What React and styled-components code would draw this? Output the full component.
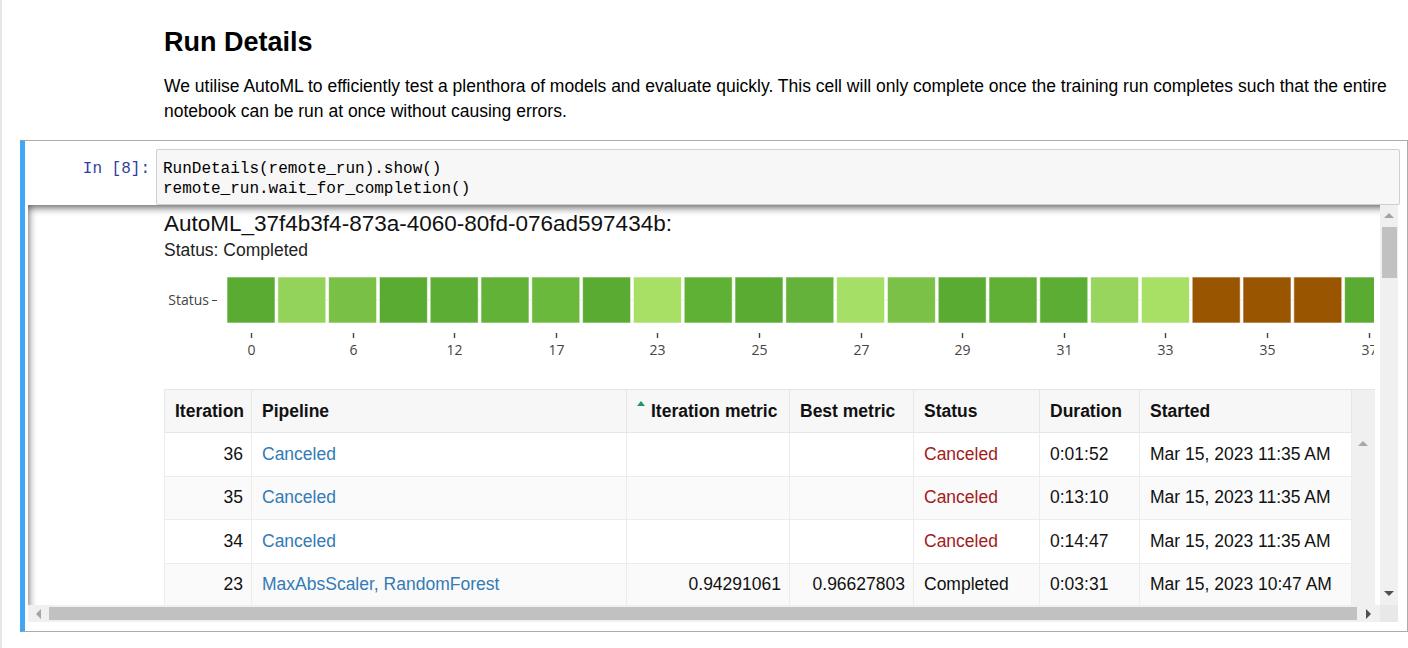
import React from "react";
import styled, { createGlobalStyle } from "styled-components";

const GlobalStyle = createGlobalStyle`
  html, body {
    margin: 0;
    padding: 0;
    background: #fff;
  }
  body {
    font-family: "Liberation Sans", Arial, sans-serif;
    color: #000;
  }
`;

const squares = [
  "#5aab32", "#93d35a", "#79c046", "#5aab32", "#5cad33", "#62b238",
  "#6ab83c", "#5aab32", "#a7e065", "#5fb135", "#5aab32", "#64b23a",
  "#a6df65", "#7bc147", "#5aab32", "#5fb035", "#5cad33", "#98d55c",
  "#a8df65", "#9a5500", "#9a5500", "#9a5500", "#5aab32",
];

const tickLabels = ["0", "6", "12", "17", "23", "25", "27", "29", "31", "33", "35", "37"];

const rows = [
  { it: "36", pipe: "Canceled", metric: "", best: "", status: "Canceled", dur: "0:01:52", started: "Mar 15, 2023 11:35 AM" },
  { it: "35", pipe: "Canceled", metric: "", best: "", status: "Canceled", dur: "0:13:10", started: "Mar 15, 2023 11:35 AM" },
  { it: "34", pipe: "Canceled", metric: "", best: "", status: "Canceled", dur: "0:14:47", started: "Mar 15, 2023 11:35 AM" },
  { it: "23", pipe: "MaxAbsScaler, RandomForest", metric: "0.94291061", best: "0.96627803", status: "Completed", dur: "0:03:31", started: "Mar 15, 2023 10:47 AM" },
];

function StatusChart() {
  const pitch = 50.8;
  return (
    <ChartSvg width="1210" height="129" viewBox="0 0 1210 129">
      <line x1="63" x2="1210" y1="40" y2="40" stroke="#ebebeb" strokeWidth="1" />
      {squares.map((c, i) => (
        <rect
          key={i}
          x={63 + i * pitch}
          y="17"
          width="48"
          height="46"
          fill={c}
          stroke="rgba(255,255,255,0.6)"
          strokeWidth="1"
        />
      ))}
      <text x="45" y="45" fontSize="14" fill="#444" textAnchor="end" fontFamily="'Open Sans', sans-serif">
        Status
      </text>
      <line x1="48" x2="53" y1="40.5" y2="40.5" stroke="#444" strokeWidth="1" />
      {tickLabels.map((t, k) => {
        const x = Math.round(87 + k * 2 * pitch) + 0.5;
        return (
          <g key={t}>
            <line x1={x} x2={x} y1="73" y2="78" stroke="#444" strokeWidth="1.4" />
            <text x={x} y="95" fontSize="14" fill="#444" textAnchor="middle" fontFamily="'Open Sans', sans-serif">
              {t}
            </text>
          </g>
        );
      })}
    </ChartSvg>
  );
}

function App() {
  return (
    <>
      <GlobalStyle />
      <Page>
        <Markdown>
          <Heading>Run Details</Heading>
          <Para>
            We utilise AutoML to efficiently test a plenthora of models and evaluate quickly. This cell will only
            complete once the training run completes such that the entire notebook can be run at once without
            causing errors.
          </Para>
        </Markdown>

        <Cell>
          <InputRow>
            <Prompt>In&nbsp;[8]:</Prompt>
            <CodeBox>
              {"RunDetails(remote_run).show()\nremote_run.wait_for_completion()"}
            </CodeBox>
          </InputRow>

          <Output>
            <Viewport>
              <RunTitle>AutoML_37f4b3f4-873a-4060-80fd-076ad597434b:</RunTitle>
              <RunStatus>Status: Completed</RunStatus>
              <StatusChart />
              <Table>
                <colgroup>
                  <col style={{ width: 87 }} />
                  <col style={{ width: 375 }} />
                  <col style={{ width: 163 }} />
                  <col style={{ width: 124 }} />
                  <col style={{ width: 126 }} />
                  <col style={{ width: 100 }} />
                  <col style={{ width: 212 }} />
                  <col style={{ width: 23 }} />
                </colgroup>
                <thead>
                  <tr>
                    <Th>Iteration</Th>
                    <Th>Pipeline</Th>
                    <Th>
                      <SortArrow />
                      Iteration metric
                    </Th>
                    <Th>Best metric</Th>
                    <Th>Status</Th>
                    <Th>Duration</Th>
                    <Th>Started</Th>
                    <ScrollHead />
                  </tr>
                </thead>
                <tbody>
                  {rows.map((r, i) => (
                    <Row key={r.it} $odd={i % 2 === 1}>
                      <Td $right>{r.it}</Td>
                      <Td>
                        <PipeLink>{r.pipe}</PipeLink>
                      </Td>
                      <Td $right>{r.metric}</Td>
                      <Td $right>{r.best}</Td>
                      <Td>
                        <StatusText $canceled={r.status === "Canceled"}>{r.status}</StatusText>
                      </Td>
                      <Td>{r.dur}</Td>
                      <Td>{r.started}</Td>
                      {i === 0 && (
                        <ScrollBody rowSpan={rows.length}>
                          <Arrow $dir="up" $color="#a8a8a8" />
                        </ScrollBody>
                      )}
                    </Row>
                  ))}
                </tbody>
              </Table>
            </Viewport>

            <VScroll>
              <ArrowButton $h={20}>
                <Arrow $dir="up" $color="#a3a3a3" />
              </ArrowButton>
              <VThumb />
              <Spacer />
              <ArrowButton $h={24}>
                <Arrow $dir="down" $color="#505050" />
              </ArrowButton>
            </VScroll>

            <HScroll>
              <ArrowButton $w={20}>
                <Arrow $dir="left" $color="#a3a3a3" />
              </ArrowButton>
              <HThumb />
              <ArrowButton $w={20}>
                <Arrow $dir="right" $color="#505050" />
              </ArrowButton>
            </HScroll>
            <Corner />
          </Output>
        </Cell>
      </Page>
    </>
  );
}

const Page = styled.div`
  box-sizing: border-box;
  min-height: 648px;
  border-left: 2px solid #e6e6e6;
  padding-top: 26px;
`;

const Markdown = styled.div`
  padding: 0 8px 0 162px;
`;

const Heading = styled.h3`
  margin: 0;
  font-size: 27px;
  line-height: 32px;
  font-weight: bold;
`;

const Para = styled.p`
  margin: 16px 0 0;
  font-size: 17.5px;
  line-height: 25px;
`;

const Cell = styled.div`
  margin: 16px 0 0 18px;
  border: 1px solid #ababab;
  border-left: 5px solid #42a5f5;
  padding: 8px 7px 9px 2px;
`;

const InputRow = styled.div`
  display: flex;
`;

const Prompt = styled.div`
  box-sizing: border-box;
  width: 129px;
  flex: none;
  padding: 10px 6px 0 0;
  text-align: right;
  font-family: "Liberation Mono", "DejaVu Sans Mono", monospace;
  font-size: 16px;
  line-height: 20px;
  color: #303f9f;
`;

const CodeBox = styled.div`
  flex: 1;
  background: #f7f7f7;
  border: 1px solid #cfcfcf;
  border-radius: 2px;
  padding: 9px 6px 5px;
  font-family: "Liberation Mono", "DejaVu Sans Mono", monospace;
  font-size: 16px;
  line-height: 20px;
  white-space: pre;
  color: #000;
`;

const Output = styled.div`
  margin: 0 2px 0 1px;
  display: grid;
  grid-template-columns: 1fr 18px;
  grid-template-rows: 400px 17px;
  box-shadow: inset 0 2px 8px rgba(0, 0, 0, 0.7);
`;

const Viewport = styled.div`
  overflow: hidden;
  min-width: 0;
  padding: 6px 6px 0 136px;
`;

const RunTitle = styled.div`
  font-size: 22.5px;
  line-height: 25px;
  color: #111;
`;

const RunStatus = styled.div`
  margin-top: 4px;
  font-size: 17.5px;
  line-height: 20px;
  color: #222;
`;

const ChartSvg = styled.svg`
  display: block;
  overflow: hidden;
`;

const Table = styled.table`
  width: 1210px;
  table-layout: fixed;
  border-collapse: collapse;
  font-size: 17.5px;
  color: #111;
`;

const Th = styled.th`
  position: relative;
  height: 43px;
  padding: 0 10px;
  box-sizing: border-box;
  text-align: left;
  font-weight: bold;
  white-space: nowrap;
  background: #f7f7f7;
  border: 1px solid #e6e6e6;
`;

const SortArrow = styled.span`
  display: inline-block;
  position: relative;
  top: -11px;
  margin: 0 6px 0 0;
  width: 0;
  height: 0;
  border-left: 4.5px solid transparent;
  border-right: 4.5px solid transparent;
  border-bottom: 5px solid #1a9a6b;
`;

const ScrollHead = styled.th`
  background: #f0f0f0;
  border-top: 1px solid #e6e6e6;
`;

const Row = styled.tr`
  height: 43.5px;
  background: ${(p) => (p.$odd ? "#fafafa" : "#fff")};
`;

const Td = styled.td`
  padding: 0 ${(p) => (p.$right ? "8px" : "10px")};
  text-align: ${(p) => (p.$right ? "right" : "left")};
  white-space: nowrap;
  overflow: hidden;
  border: 1px solid #ececec;
`;

const ScrollBody = styled.td`
  vertical-align: top;
  background: #f0f0f0;
  padding-top: 8px;
  text-align: center;
  font-size: 0;
  line-height: 0;
`;

const PipeLink = styled.span`
  color: #337ab7;
`;

const StatusText = styled.span`
  color: ${(p) => (p.$canceled ? "#a31b1b" : "#111")};
`;

const VScroll = styled.div`
  display: flex;
  flex-direction: column;
  background: #f0f0f0;
`;

const HScroll = styled.div`
  display: flex;
  align-items: center;
  background: #f0f0f0;
  padding-right: 2px;
`;

const Corner = styled.div`
  background: #e8e8e8;
`;

const ArrowButton = styled.div`
  flex: none;
  display: flex;
  align-items: center;
  justify-content: center;
  height: ${(p) => (p.$h ? `${p.$h}px` : "100%")};
  width: ${(p) => (p.$w ? `${p.$w}px` : "100%")};
`;

const VThumb = styled.div`
  flex: none;
  height: 51px;
  margin: 2px 1px 0 2px;
  background: #c1c1c1;
`;

const HThumb = styled.div`
  flex: 1;
  height: 13px;
  margin: 0 1px;
  background: #c1c1c1;
`;

const Spacer = styled.div`
  flex: 1;
`;

const Arrow = styled.span`
  display: inline-block;
  width: 0;
  height: 0;
  ${(p) =>
    p.$dir === "up"
      ? `border-left: 5px solid transparent; border-right: 5px solid transparent; border-bottom: 5px solid ${p.$color};`
      : p.$dir === "down"
      ? `border-left: 5px solid transparent; border-right: 5px solid transparent; border-top: 5px solid ${p.$color};`
      : p.$dir === "left"
      ? `border-top: 5px solid transparent; border-bottom: 5px solid transparent; border-right: 5px solid ${p.$color};`
      : `border-top: 5px solid transparent; border-bottom: 5px solid transparent; border-left: 5px solid ${p.$color};`}
`;

export default App;
